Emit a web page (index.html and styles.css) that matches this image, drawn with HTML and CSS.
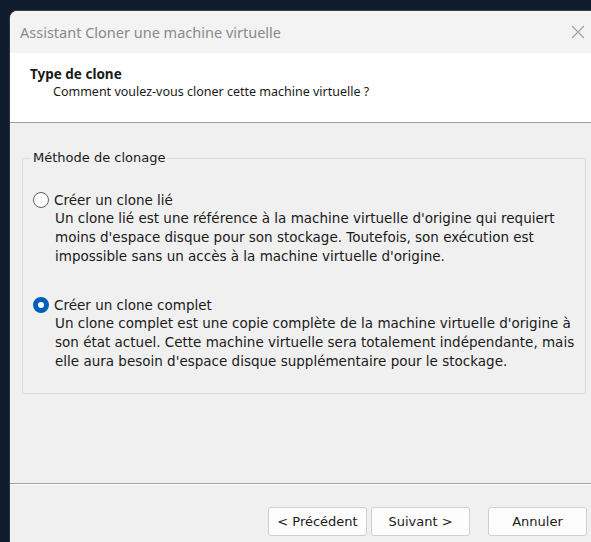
FILE: index.html
```html
<!DOCTYPE html>
<html lang="fr">
<head>
<meta charset="utf-8">
<title>Assistant Cloner une machine virtuelle</title>
<link rel="stylesheet" href="styles.css">
</head>
<body>
<div class="window">
  <div class="titlebar">
    <span class="title">Assistant Cloner une machine virtuelle</span>
    <svg class="close" width="14" height="14" viewBox="0 0 14 14">
      <path d="M1 1 L13 13 M13 1 L1 13" stroke="#a0a0a0" stroke-width="1.1" fill="none"/>
    </svg>
  </div>
  <div class="header">
    <div class="heading">Type de clone</div>
    <div class="subheading">Comment voulez-vous cloner cette machine virtuelle ?</div>
  </div>
  <div class="body">
    <fieldset class="group">
      <legend>Méthode de clonage</legend>
      <div class="option">
        <div class="option-row">
          <span class="radio"></span>
          <span class="label">Créer un clone lié</span>
        </div>
        <p class="desc">Un clone lié est une référence à la machine virtuelle d'origine qui requiert moins d'espace disque pour son stockage. Toutefois, son exécution est impossible sans un accès à la machine virtuelle d'origine.</p>
      </div>
      <div class="option">
        <div class="option-row">
          <span class="radio checked"></span>
          <span class="label">Créer un clone complet</span>
        </div>
        <p class="desc">Un clone complet est une copie complète de la machine virtuelle d'origine à son état actuel. Cette machine virtuelle sera totalement indépendante, mais elle aura besoin d'espace disque supplémentaire pour le stockage.</p>
      </div>
    </fieldset>
  </div>
  <div class="footer">
    <div class="nav">
      <button class="btn">&lt; Précédent</button>
      <button class="btn">Suivant &gt;</button>
    </div>
    <button class="btn">Annuler</button>
  </div>
</div>
</body>
</html>
```

FILE: styles.css
```css
* { box-sizing: border-box; }

html, body {
  margin: 0;
  padding: 0;
  height: 100%;
  overflow: hidden;
}

body {
  background: #0f1c2e;
  font-family: "DejaVu Sans", Tahoma, sans-serif;
  font-size: 13.5px;
  color: #1a1a1a;
  padding: 10px 0 0 9px;
}

.window {
  width: 582px;
  height: 532px;
  background: #f0f0f0;
  border-top: 1px solid #3a3f46;
  border-left: 1px solid #2b3440;
  border-top-left-radius: 8px;
  display: flex;
  flex-direction: column;
  overflow: hidden;
}

.titlebar {
  height: 42px;
  flex: none;
  background: #f3f3f3;
  display: flex;
  align-items: center;
  justify-content: space-between;
  padding: 0 0 0 10px;
}

.title {
  font-family: "Noto Sans", "Open Sans", sans-serif;
  font-size: 14.5px;
  color: #8a8a8a;
}

.close {
  margin-right: 6px;
}

.header {
  flex: none;
  background: #ffffff;
  height: 70px;
  padding: 12px 0 0 20px;
  border-bottom: 1px solid #a0a0a0;
  font-family: "Noto Sans", "Open Sans", sans-serif;
  font-size: 12.5px;
}

.heading {
  font-weight: bold;
  font-size: 13.5px;
  line-height: 18px;
}

.subheading {
  padding-left: 23px;
  line-height: 18px;
}

.body {
  flex: none;
  height: 361px;
  padding: 27px 0 0 12px;
  border-bottom: 1px solid #a0a0a0;
  box-shadow: 0 1px 0 #ffffff;
}

.group {
  margin: 0;
  width: 564px;
  height: 244px;
  border: 1px solid #dcdcdc;
  padding: 25px 0 0 10px;
}

.group legend {
  padding: 0 2px;
  margin-left: -2px;
  line-height: 16px;
  font-size: 13px;
}

.option + .option {
  margin-top: 30px;
}

.option-row {
  display: flex;
  align-items: center;
  height: 18px;
}

.radio {
  width: 16px;
  height: 16px;
  border-radius: 50%;
  border: 1px solid #5f5f5f;
  background: #ffffff;
  margin-right: 5px;
  flex: none;
}

.radio.checked {
  border: 5px solid #005fb8;
  background: #ffffff;
}

.desc {
  margin: 0 0 0 22px;
  line-height: 19px;
  width: 520px;
}

.footer {
  display: flex;
  align-items: flex-start;
  padding: 23px 0 0 258px;
}

.nav {
  display: flex;
  gap: 4px;
  margin-right: 18px;
}

.btn {
  width: 99px;
  height: 29px;
  font-family: "DejaVu Sans", Tahoma, sans-serif;
  font-size: 13px;
  color: #1a1a1a;
  background: #fdfdfd;
  border: 1px solid #d0d0d0;
  border-radius: 3px;
  padding: 0;
}
```
